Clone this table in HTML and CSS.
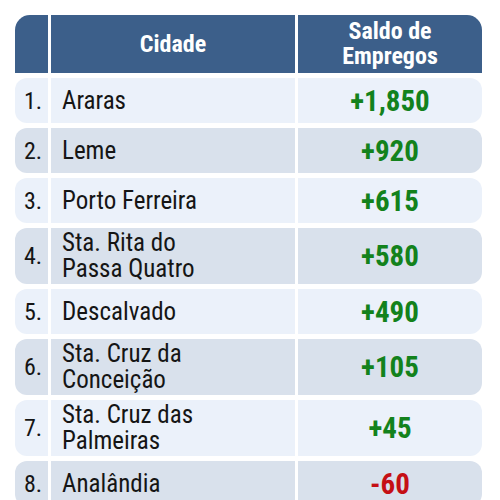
FILE: index.html
```html
<!DOCTYPE html>
<html lang="pt-BR">

<head>
    <meta charset="UTF-8">
    <meta name="viewport" content="width=device-width, initial-scale=1.0">
    <title>Saldo de Empregos</title>
    <link rel="stylesheet" href="styles.css">
</head>

<body>
    <div class="ranking">
        <div class="cell head first"></div>
        <div class="cell head city">Cidade</div>
        <div class="cell head last">Saldo de<br>Empregos</div>

        <div class="cell num first">1.</div>
        <div class="cell city">Araras</div>
        <div class="cell value last">+1,850</div>

        <div class="cell num first even">2.</div>
        <div class="cell city even">Leme</div>
        <div class="cell value last even">+920</div>

        <div class="cell num first">3.</div>
        <div class="cell city">Porto Ferreira</div>
        <div class="cell value last">+615</div>

        <div class="cell num first even">4.</div>
        <div class="cell city even">Sta. Rita do<br>Passa Quatro</div>
        <div class="cell value last even">+580</div>

        <div class="cell num first">5.</div>
        <div class="cell city">Descalvado</div>
        <div class="cell value last">+490</div>

        <div class="cell num first even">6.</div>
        <div class="cell city even">Sta. Cruz da<br>Conceição</div>
        <div class="cell value last even">+105</div>

        <div class="cell num first">7.</div>
        <div class="cell city">Sta. Cruz das<br>Palmeiras</div>
        <div class="cell value last">+45</div>

        <div class="cell num first even">8.</div>
        <div class="cell city even">Analândia</div>
        <div class="cell value last even negative">-60</div>
    </div>
</body>

</html>
```

FILE: styles.css
```css
body {
    margin: 0;
    padding: 15px 18px 0 15px;
    background-color: #fff;
    font-family: "Roboto Condensed", "Liberation Sans Narrow", "DejaVu Sans Condensed", Roboto, sans-serif;
    color: #151515;
}

.ranking {
    display: grid;
    grid-template-columns: 33px 244px 1fr;
    column-gap: 3px;
    row-gap: 5px;
}

.cell {
    display: flex;
    align-items: center;
    min-height: 45px;
    padding: 2px 0;
    box-sizing: border-box;
    background-color: #ebf1fa;
    font-size: 25px;
    line-height: 26px;
}

.cell.even {
    background-color: #d9e1ec;
}

.first {
    border-radius: 12px 0 0 12px;
    justify-content: center;
    padding-left: 3px;
}

.last {
    border-radius: 0 12px 12px 0;
    justify-content: center;
}

.num {
    font-size: 24px;
}

.city {
    padding-left: 11px;
}

.value {
    font-weight: bold;
    font-size: 29px;
    color: #13821c;
}

.value.negative {
    color: #c50f15;
}

.head {
    background-color: #3c5f8a;
    color: #fff;
    font-weight: bold;
    font-size: 24px;
    line-height: 25px;
    height: 58px;
    text-align: center;
    justify-content: center;
    padding: 0;
}

.head.first {
    border-radius: 15px 0 0 0;
}

.head.last {
    border-radius: 0 15px 0 0;
}
```
